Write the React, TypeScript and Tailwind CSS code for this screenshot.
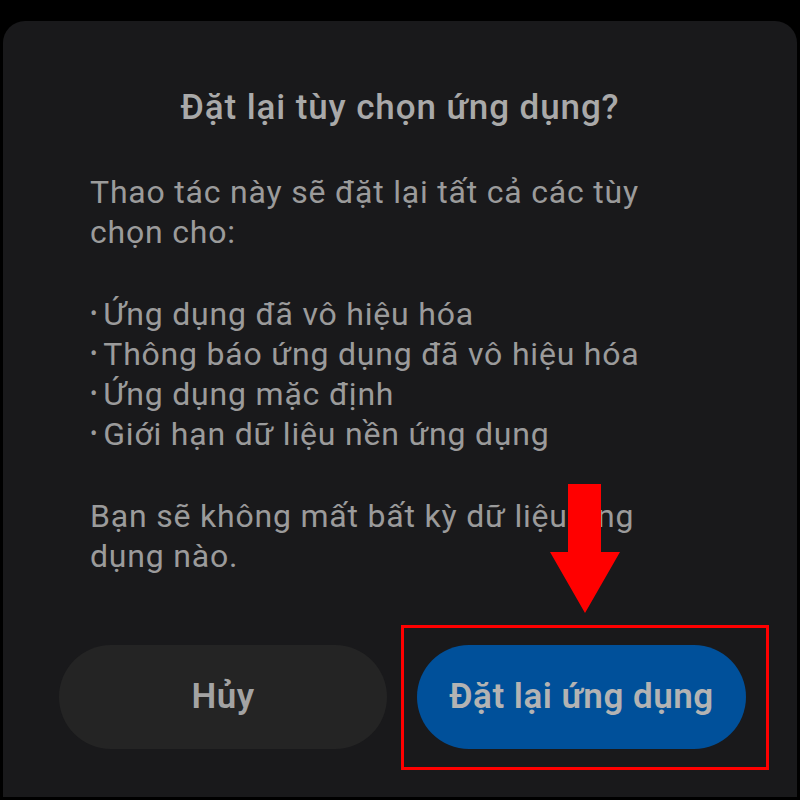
export default function App() {
  const bullets = [
    'Ứng dụng đã vô hiệu hóa',
    'Thông báo ứng dụng đã vô hiệu hóa',
    'Ứng dụng mặc định',
    'Giới hạn dữ liệu nền ứng dụng',
  ];

  return (
    <div className="relative h-[800px] w-[800px] overflow-hidden bg-black pl-[3px] pr-[3px] pt-[21px] font-['Roboto',sans-serif]">
      <div className="flex h-[776px] w-[794px] flex-col rounded-t-[22px] bg-[#19191b] pt-[67px]">
        <h1 className="text-center text-[35px] font-medium leading-[40px] tracking-[0.9px] text-[#a9a9a9]">Đặt lại tùy chọn ứng dụng?</h1>

        <div className="mt-[44px] pl-[87px] text-[32px] leading-[40px] tracking-[0.8px] text-[#9b9b9b]">
          <p className="whitespace-nowrap">Thao tác này sẽ đặt lại tất cả các tùy</p>
          <p className="whitespace-nowrap">chọn cho:</p>
          <ul className="mt-[42px]">
            {bullets.map((b) => (
              <li key={b} className="flex items-center whitespace-nowrap">
                <span className="mr-[5px] text-[22px]">•</span>
                {b}
              </li>
            ))}
          </ul>
          <p className="mt-[42px] whitespace-nowrap">Bạn sẽ không mất bất kỳ dữ liệu ứng</p>
          <p className="whitespace-nowrap">dụng nào.</p>
        </div>

        <div className="mt-[69px] flex gap-[30px] pl-[56px]">
          <button type="button" className="h-[104px] w-[328px] rounded-full bg-[#242424] text-[35px] font-semibold tracking-[0.5px] text-[#a3a3a3]">
            Hủy
          </button>
          <button type="button" className="h-[104px] w-[329px] rounded-full bg-[#00509a] text-[35px] font-semibold tracking-[0.5px] text-[#b3b3b3]">
            Đặt lại ứng dụng
          </button>
        </div>
      </div>

      {/* red highlight overlay */}
      <div className="absolute left-[401px] top-[625px] h-[145px] w-[368px] border-[3px] border-[#ff0000]" />
      <svg className="absolute left-[548px] top-[484px]" width="74" height="130" viewBox="0 0 74 130">
        <path d="M20 0 H53 V68 H72 L37 129 L2 68 H20 Z" fill="#ff0000" />
      </svg>
    </div>
  );
}
